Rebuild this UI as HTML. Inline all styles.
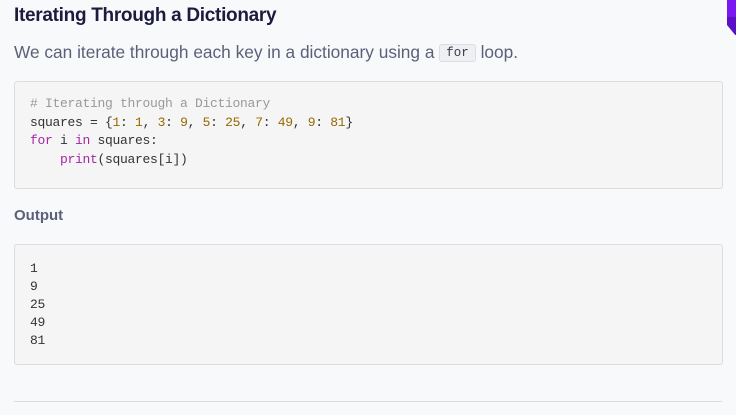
<!DOCTYPE html>
<html><head><style>
body{margin:0;width:736px;height:415px;background:#f8f9fb;position:relative;overflow:hidden;font-family:"Liberation Sans",sans-serif}
h2{position:absolute;left:14px;top:5px;margin:0;font-size:19px;font-weight:bold;color:#1c1b3f;letter-spacing:-0.3px}
p{position:absolute;left:14px;top:42px;margin:0;font-size:17.3px;color:#5c5f78;letter-spacing:0}
code.i{font-family:"Liberation Mono",monospace;font-size:12.5px;background:#eff0f3;border:1px solid #dcdde3;border-radius:3px;padding:1px 6px;color:#3a3a4a;position:relative;top:-2px}
.box{position:absolute;left:14px;width:707px;background:#f5f5f5;border:1px solid #dcdde3;border-radius:3px}
pre{margin:0;font-family:"Liberation Mono",monospace;font-size:13px;letter-spacing:-0.3px;line-height:18.5px;color:#333;padding:13px 0 0 15px}
.c{color:#999}.n{color:#986801}.k{color:#a626a4}
h3{position:absolute;left:14px;top:207px;margin:0;font-size:15px;font-weight:bold;color:#5c5f78}
.line{position:absolute;left:14px;width:708px;top:401px;height:1px;background:#dcdde3}
.tri{position:absolute;right:0;top:0;width:9px;height:35px;background:linear-gradient(#7b17f0 0 17px,#5a10c8 17px)}
.tri2{position:absolute;right:0;top:25px;width:0;height:0;border-left:9px solid #f8f9fb;border-top:11px solid transparent}
</style></head><body>
<div class="tri"></div><div class="tri2"></div>
<h2>Iterating Through a Dictionary</h2>
<p>We can iterate through each key in a dictionary using a <code class="i">for</code> loop.</p>
<div class="box" style="top:81px;height:106px"><pre><span class="c"># Iterating through a Dictionary</span>
squares = {<span class="n">1</span>: <span class="n">1</span>, <span class="n">3</span>: <span class="n">9</span>, <span class="n">5</span>: <span class="n">25</span>, <span class="n">7</span>: <span class="n">49</span>, <span class="n">9</span>: <span class="n">81</span>}
<span class="k">for</span> i <span class="k">in</span> squares:
    <span class="k">print</span>(squares[i])</pre></div>
<h3>Output</h3>
<div class="box" style="top:244px;height:119px"><pre style="line-height:18px;padding-top:15px">1
9
25
49
81</pre></div>
<div class="line"></div>
</body></html>
